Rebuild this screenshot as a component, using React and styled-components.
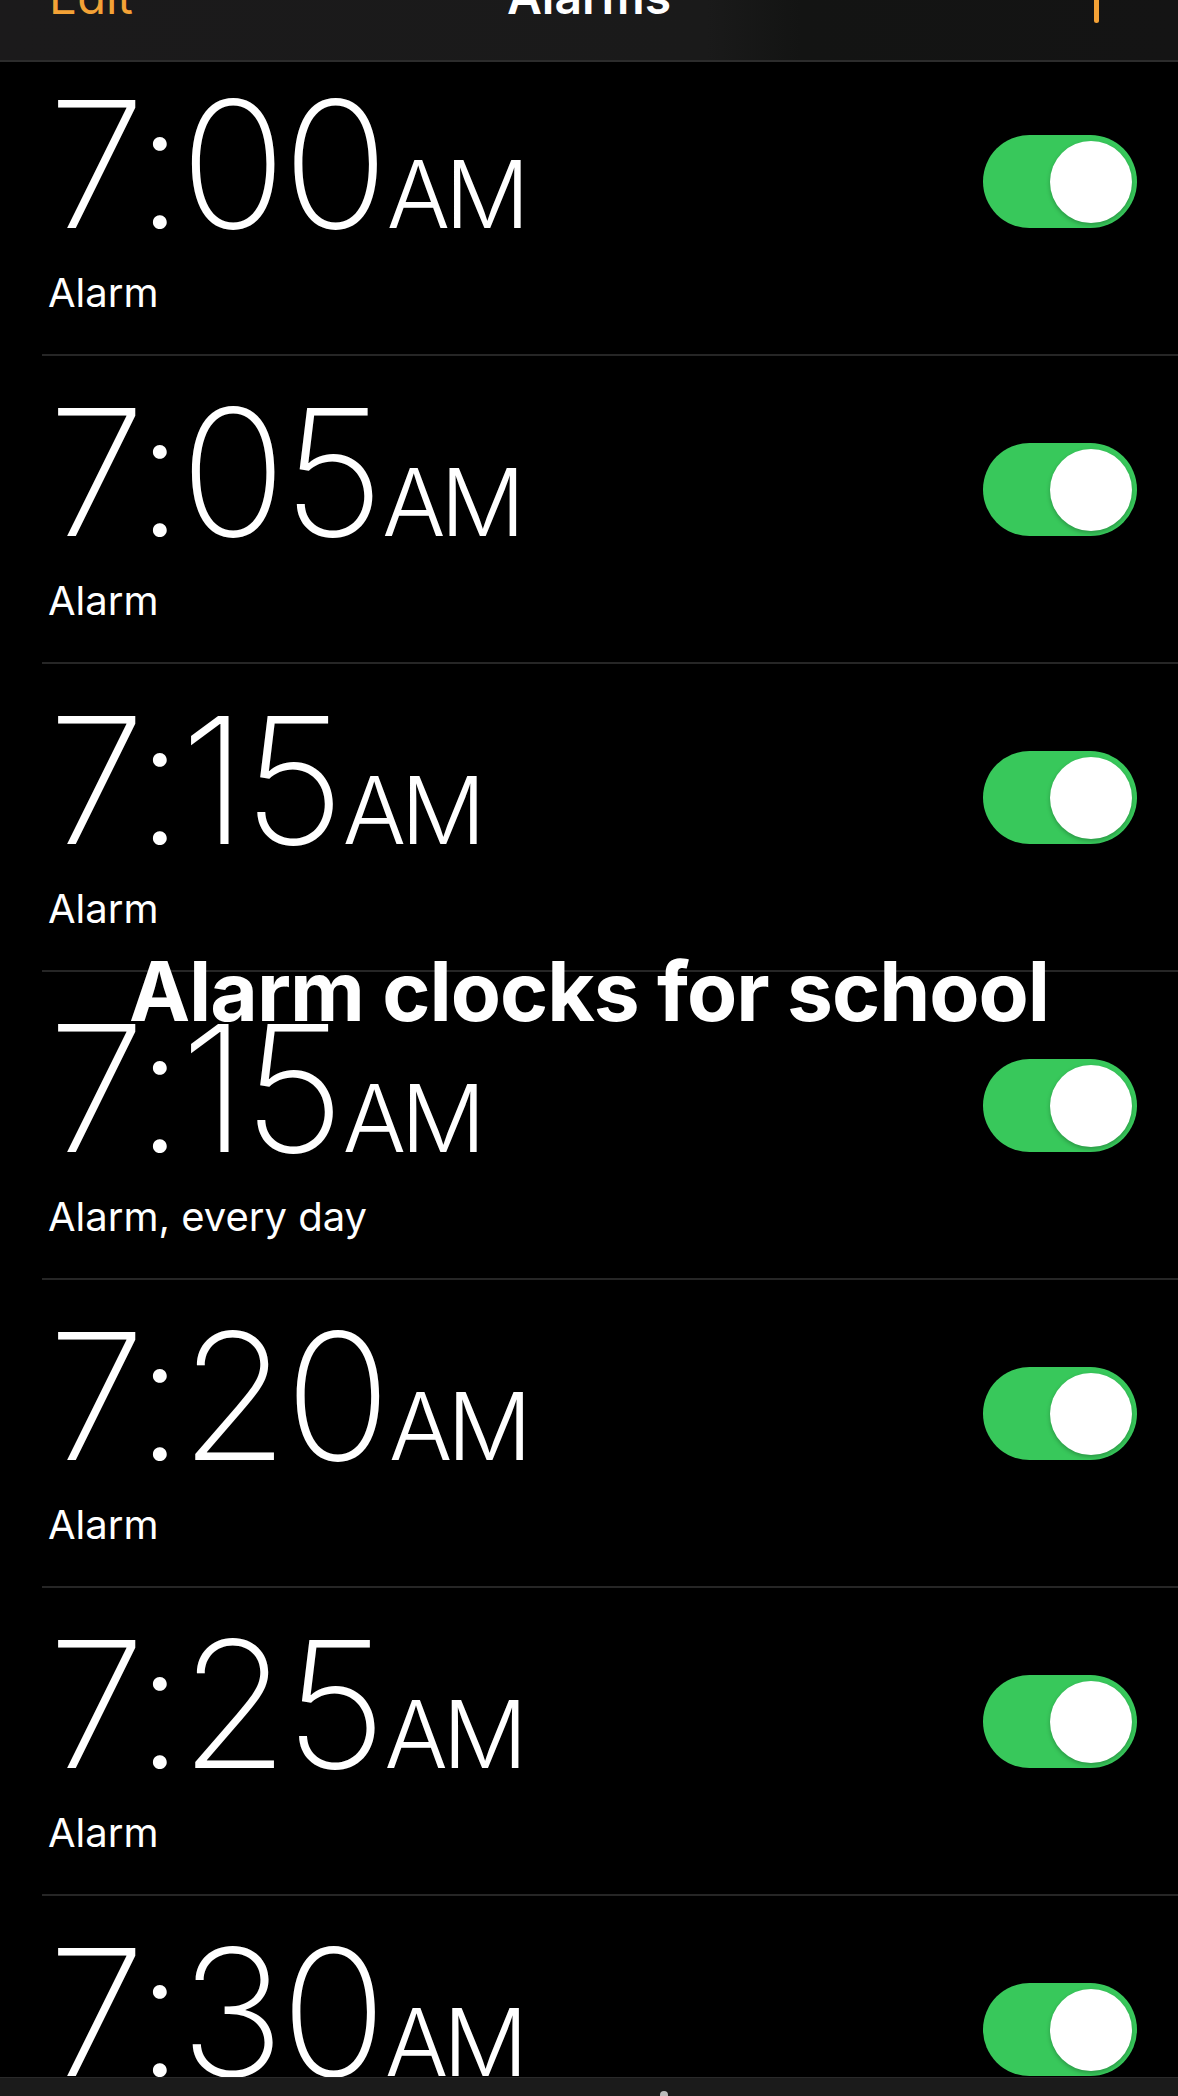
import React from 'react';
import styled, { createGlobalStyle } from 'styled-components';

const alarms = [
  { time: '7:00', label: 'Alarm' },
  { time: '7:05', label: 'Alarm' },
  { time: '7:15', label: 'Alarm' },
  { time: '7:15', label: 'Alarm, every day' },
  { time: '7:20', label: 'Alarm' },
  { time: '7:25', label: 'Alarm' },
  { time: '7:30', label: 'Alarm' },
];

const GlobalStyle = createGlobalStyle`
  body {
    margin: 0;
    background: #000;
    font-family: Inter, "Liberation Sans", sans-serif;
  }
`;

const Screen = styled.div`
  position: relative;
  width: 1178px;
  height: 2096px;
  overflow: hidden;
  background: #000;
  display: flex;
  flex-direction: column;
`;

const NavBar = styled.header`
  position: relative;
  z-index: 2;
  height: 60px;
  flex-shrink: 0;
  overflow: hidden;
  background: linear-gradient(90deg, #1b1a1b 0%, #1a1a1a 60%, #131413 68%, #141414 100%);
  border-bottom: 2px solid #2c2c2c;
  display: grid;
  grid-template-columns: 1fr auto 1fr;
  align-items: start;
  padding: 0 49px;
`;

const NavButton = styled.span`
  font-size: 47px;
  line-height: 1;
  margin-top: -27px;
  color: #f4a236;
`;

const NavTitle = styled.span`
  font-size: 48px;
  font-weight: 600;
  line-height: 1;
  margin-top: -27px;
  color: #fff;
`;

const PlusStroke = styled.span`
  justify-self: end;
  margin-right: 30px;
  width: 5px;
  height: 23px;
  border-radius: 0 0 3px 3px;
  background: #f4a236;
`;

const List = styled.ul`
  list-style: none;
  margin: -14px 0 0;
  padding: 0;
`;

const Row = styled.li`
  height: 306px;
  margin-left: 42px;
  border-bottom: 2px solid #262626;
  display: flex;
  justify-content: space-between;
  align-items: flex-start;
`;

const Info = styled.div`
  padding-left: 6px;
  color: #fff;
`;

const Time = styled.div`
  font-size: 176px;
  font-weight: 200;
  line-height: 1;
  padding-top: 28px;
  letter-spacing: -4px;
  white-space: nowrap;
`;

const Meridiem = styled.span`
  font-size: 94px;
  font-weight: 300;
  letter-spacing: -5px;
  margin-left: 2px;
`;

const Label = styled.div`
  font-size: 40px;
  line-height: 1;
  margin-top: 21px;
`;

const Switch = styled.div`
  margin: 87px 41px 0 0;
  width: 154px;
  height: 93px;
  border-radius: 47px;
  background: #38c85b;
  display: flex;
  align-items: center;
  justify-content: ${p => (p.$on ? 'flex-end' : 'flex-start')};
  padding: 0 5px;
  box-sizing: border-box;
`;

const Knob = styled.span`
  width: 82px;
  height: 82px;
  border-radius: 50%;
  background: #fff;
  box-shadow: 0 2px 4px rgba(0, 0, 0, 0.25);
`;

const Caption = styled.div`
  position: absolute;
  z-index: 3;
  top: 951px;
  left: 0;
  right: 0;
  text-align: center;
  font-size: 82px;
  font-weight: 700;
  line-height: 1;
  letter-spacing: -1px;
  color: #fff;
`;

const TabBar = styled.footer`
  position: absolute;
  z-index: 2;
  left: 0;
  right: 0;
  bottom: 0;
  height: 18px;
  background: #1b1b1b;
  border-top: 1px solid #2a2a2a;
  display: flex;
  justify-content: center;
`;

const TabDot = styled.span`
  margin: 13px 0 0 150px;
  width: 8px;
  height: 8px;
  border-radius: 50%;
  background: #bbb;
`;

function AlarmRow({ time, label }) {
  return (
    <Row>
      <Info>
        <Time>
          {time}
          <Meridiem>AM</Meridiem>
        </Time>
        <Label>{label}</Label>
      </Info>
      <Switch $on>
        <Knob />
      </Switch>
    </Row>
  );
}

export default function App() {
  return (
    <Screen>
      <GlobalStyle />
      <NavBar>
        <NavButton>Edit</NavButton>
        <NavTitle>Alarms</NavTitle>
        <PlusStroke />
      </NavBar>
      <List>
        {alarms.map((a, i) => (
          <AlarmRow key={i} time={a.time} label={a.label} />
        ))}
      </List>
      <Caption>Alarm clocks for school</Caption>
      <TabBar>
        <TabDot />
      </TabBar>
    </Screen>
  );
}
